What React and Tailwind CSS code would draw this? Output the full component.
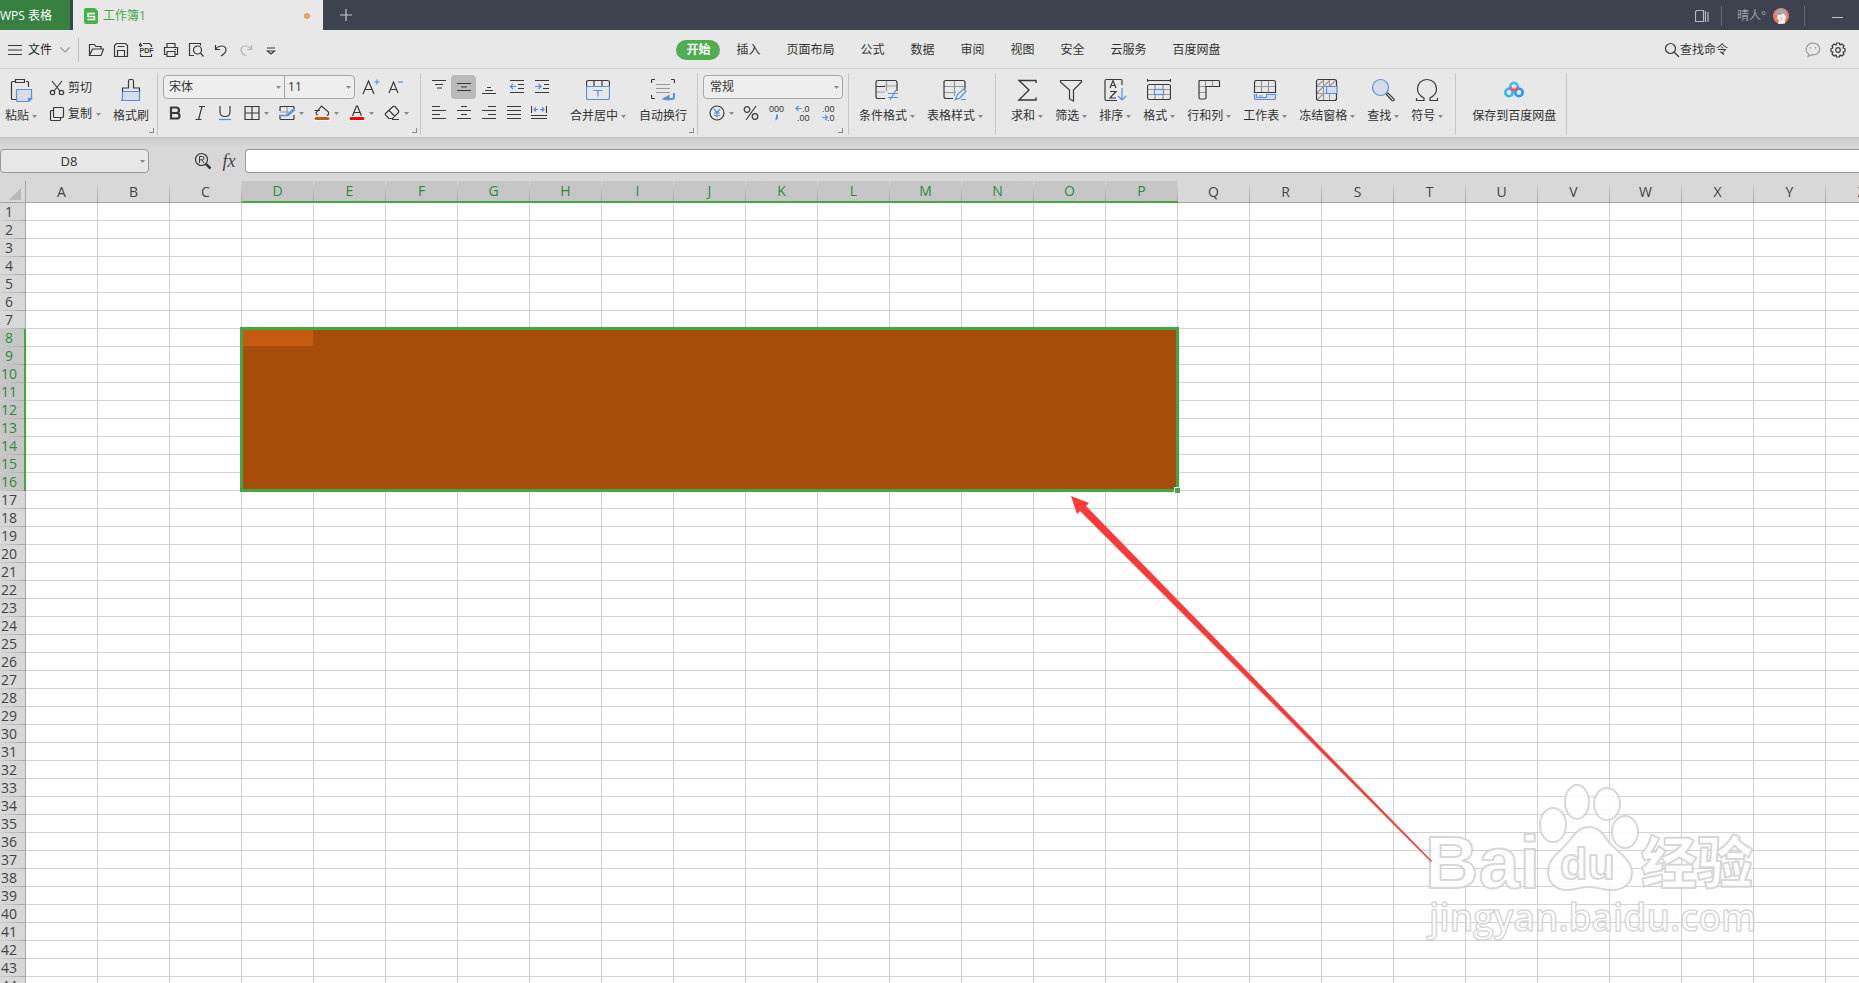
import React, { useState } from 'react';
import clsx from 'clsx';

const COLUMNS = 'ABCDEFGHIJKLMNOPQRSTUVWXYZ'.split('');
const ROWS = Array.from({ length: 46 }, (_, i) => i + 1);
const SELECTION = { left: 3, right: 15, top: 8, bottom: 16 };

const inCols = (c) => c >= SELECTION.left && c <= SELECTION.right;
const inRows = (r) => r >= SELECTION.top && r <= SELECTION.bottom;

const DARK = '#3a3a3a';
const BLUE = '#5a8fe0';
const MID = '#9a9a9a';
const PALE = '#d6dde8';

/* SHARED ICON FRAME */
const Icon = ({ w = 16, h = 16, children, className }) => (
    <svg width={w} height={h} viewBox={`0 0 ${w} ${h}`} fill="none" stroke={DARK} strokeWidth="1.2" className={clsx('shrink-0', className)} aria-hidden="true">
        {children}
    </svg>
);

const Caret = ({ className }) => (
    <svg width="5" height="3" viewBox="0 0 5 3" className={clsx('shrink-0', className)} aria-hidden="true">
        <path d="M0 0h5L2.5 3z" fill="#8a8a8a" />
    </svg>
);

/* QUICK ACCESS ICONS */
const quickTools = [
    { label: '打开', icon: <Icon><path d="M1.5 13.5V2.5h5l1.5 2h5v2.5M1.5 13.5l3-6.5h11l-2.5 6.5z" /></Icon> },
    { label: '保存', icon: <Icon><path d="M1.5 14.5v-11l2-2h9l2 2v11zM4.5 14V8.500h7V14M4.500 4.500h7" /></Icon> },
    {
        label: '输出为PDF',
        icon: (
            <Icon>
                <path d="M2.500 5V3.500M5 1.500h6.500l2 2V5M2.500 12v2.500h11V12M1 4l1.500-2.500L4 4" />
                <text x="1.500" y="11" fontSize="7" fontWeight="700" fontFamily="Liberation Sans" fill={DARK} stroke="none">PDF</text>
            </Icon>
        ),
    },
    { label: '打印', icon: <Icon><path d="M4 5V1.500h8V5M4 12.500H1.500V5.500h13v7H12M4 9.500h8v5H4zM11.500 7.500h1.500" /></Icon> },
    { label: '打印预览', icon: <Icon><path d="M6 13.500H1.500v-12h11v2" /><circle cx="9.500" cy="8" r="4" /><path d="M12.500 11l3 3.500" /></Icon> },
    { label: '撤销', icon: <Icon><path d="M2.500 3v4.500H7M2.500 7.500C6 2.500 13 3 13 8c0 3-2.500 4.500-5 6" /></Icon> },
    { label: '恢复', icon: <Icon><path stroke="#b4b4b4" d="M13.500 3v4.500H9M13.500 7.500C10 2.500 3 3 3 8c0 3 2.500 4.500 5 6" /></Icon> },
    { label: '更多', icon: <Icon><path d="M4 6h8M4.500 9L8 12l3.500-3z" /></Icon> },
];

const menuTabs = ['插入', '页面布局', '公式', '数据', '审阅', '视图', '安全', '云服务', '百度网盘'];

/* LARGE RIBBON ICONS */
const PasteIcon = (
    <Icon w={24} h={24}>
        <path d="M8 21.500H3.500a1 1 0 0 1-1-1v-16a1 1 0 0 1 1-1H6M17 3.500h1.500a1 1 0 0 1 1 1V9M6.500 1.500h9v3h-9z" />
        <path d="M8.500 11.500h14v9l-3 3h-11a1 1 0 0 1-1-1v-10a1 1 0 0 1 1-1z" fill={PALE} stroke={BLUE} />
        <path d="M22.500 20.500h-3v3z" fill={BLUE} stroke={BLUE} />
    </Icon>
);
const BrushIcon = (
    <Icon w={24} h={24}>
        <path d="M3.500 13.500h17v9H2.500l1-2z" fill={PALE} stroke={BLUE} />
        <path d="M3.500 13.500v-3.500h6V3q0-1.500 1.500-1.500h2q1.500 0 1.500 1.500v7h6v3.500" />
    </Icon>
);
const MergeIcon = (
    <Icon w={24} h={24}>
        <path d="M.5 8V4.500q0-2 2-2h19q2 0 2 2V8M8 3v5M16 3v5" />
        <path d="M.5 8.500h23v11q0 2-2 2h-19q-2 0-2-2zM7.500 12.500h9M12 12.500v6" stroke={BLUE} />
    </Icon>
);
const WrapIcon = (
    <Icon w={24} h={24}>
        <path d="M.5 5V2.500q0-1 1-1H4M20 1.500h2.500q1 0 1 1V5M.5 17v2.500q0 1 1 1H4" />
        <path d="M5 6.500h14M5 10.500h14M5 14.500h14" stroke={MID} />
        <path d="M23 15v4q0 2-2 2h-3" stroke={BLUE} strokeWidth="2" />
        <path d="M12 21l6-3.500V22z" fill={BLUE} stroke={BLUE} />
    </Icon>
);
const CondIcon = (
    <Icon w={24} h={24}>
        <path d="M9 8h13M1 14h9M11.500 3v10" stroke={MID} />
        <path d="M10 20.500H3q-2 0-2-2v-14q0-2 2-2h17q2 0 2 2V13M1 8.500h9" />
        <path d="M13 15.500h10M13 19.500h10M21 12l-6 10" stroke={BLUE} />
    </Icon>
);
const StyleIcon = (
    <Icon w={24} h={24}>
        <path d="M1 8.500h21M1 14.500h12M11.500 3v15" stroke={MID} />
        <path d="M10 20.500H3q-2 0-2-2v-14q0-2 2-2h17q2 0 2 2V11" />
        <path d="M12.500 21.500l2-5 6-5.500 2.500 2-6 7-4.500 1.500zM18 21.500h5" stroke={BLUE} />
    </Icon>
);
const SumIcon = <Icon w={24} h={24}><path d="M21 5V2.500H4l10 9.500-10 10h17V19.500" strokeWidth="1.400" /></Icon>;
const FilterIcon = <Icon w={24} h={24}><path d="M1.500 2.500h21v1.500l-8 8v11l-4-2v-9l-9-8z" /></Icon>;
const SortIcon = (
    <Icon w={24} h={24}>
        <path d="M14 22.500H3.500q-1.500 0-1.500-1.500V3q0-1.500 1.500-1.500H18q1 0 1 1V7" />
        <path d="M7 10l3-7.500L13 10M8 7.500h4M7 13.500h6L7 20h6" />
        <path d="M19 10v12M15 18l4 4 4-4" stroke={BLUE} />
    </Icon>
);
const FormatIcon = (
    <Icon w={24} h={24}>
        <path d="M.5 1v3M23.500 1v3M.5 2.500h23" />
        <path d="M8 7v14M16 7v14M1 11.500h22M1 16.500h22" stroke={MID} />
        <rect x=".5" y="6.500" width="23" height="15" rx="2" />
        <rect x="7.500" y="11.500" width="9" height="5" stroke={BLUE} fill="#e8e8e8" />
    </Icon>
);
const RowColIcon = (
    <Icon w={24} h={24}>
        <path d="M8.500 2v7M15.500 2v7M2 8.500h7M2 14.500h7" stroke={MID} />
        <path d="M3 2.500h18.500q1 0 1 1V8.500H9v11q0 1.500-1.500 1.500h-4q-1.500 0-1.500-1.500v-16q0-1 1-1z" />
    </Icon>
);
const SheetIcon = (
    <Icon w={24} h={24}>
        <path d="M8.500 2v12M15.500 2v12M1 8.500h22" stroke={MID} />
        <path d="M1.500 14.500v-10q0-2 2-2h17q2 0 2 2v10z" />
        <path d="M1.500 16v4.500q0 1 1 1h19q1 0 1-1V16.500h-9v3h-10V16M6 18h4" stroke={BLUE} fill={PALE} />
    </Icon>
);
const FreezeIcon = (
    <Icon w={24} h={24}>
        <path d="M8.500 2v20M14.500 2v20M2 8.500h20M2 15.500h20M2 8l7-6M2 15L15 2M2 22l6-6M15 8l6-6" stroke={MID} />
        <rect x="1.500" y="1.500" width="20" height="21" rx="2" />
        <path d="M11.500 8.500h10.500v7H11.500z" fill={PALE} stroke={BLUE} />
    </Icon>
);
const FindIcon = (
    <Icon w={24} h={24}>
        <circle cx="9.500" cy="9.500" r="8" fill={PALE} stroke={BLUE} />
        <path d="M15.500 16.500l1.500-1.500 6 6q.5 1-.5 1.500t-1.500 0z" />
    </Icon>
);
const OmegaIcon = <Icon w={24} h={24}><path d="M1.500 20v2.500H9v-2.500C5 18 2.500 15 2.500 11c0-5.500 4-9.500 9.500-9.500s9.500 4 9.500 9.500c0 4-2.500 7-6.500 9v2.500h7.500v-2.500" /></Icon>;
const NetdiskIcon = (
    <Icon w={24} h={24}>
        <circle cx="7" cy="14.500" r="3.700" stroke="#31b9f3" strokeWidth="2.600" />
        <circle cx="17" cy="14.500" r="3.700" stroke="#1ea0fa" strokeWidth="2.600" />
        <path d="M8.300 9.500a3.800 3.800 0 1 1 7.400 0" stroke="#35c3f5" strokeWidth="2.600" />
        <path d="M8.300 9a3.800 3.800 0 0 0 7.400 0" stroke="#f8506c" strokeWidth="2.600" />
    </Icon>
);

const analysisTools = [
    { label: '求和', icon: SumIcon },
    { label: '筛选', icon: FilterIcon },
    { label: '排序', icon: SortIcon },
    { label: '格式', icon: FormatIcon },
    { label: '行和列', icon: RowColIcon },
    { label: '工作表', icon: SheetIcon },
    { label: '冻结窗格', icon: FreezeIcon },
    { label: '查找', icon: FindIcon },
    { label: '符号', icon: OmegaIcon },
];

/* SMALL RIBBON ICONS */
const fontDropdowns = [
    { label: '边框', icon: <Icon><path d="M1 1.500h14v13H1zM8 1.500v13M1 8h14" /></Icon> },
    {
        label: '绘制边框',
        icon: (
            <Icon>
                <path d="M15 4V2.500q0-1-1-1H2q-1 0-1 1V6M1 11v2.500q0 1 1 1h12q1 0 1-1V10" />
                <path d="M1 7h9M8 2v9" stroke={MID} />
                <path d="M0 10.500h9L15.500 5h-2L8 10.500" stroke={BLUE} strokeWidth="1.500" />
            </Icon>
        ),
    },
    {
        label: '填充颜色',
        icon: (
            <Icon>
                <path d="M3.500 10.500L2 8l5.500-7 7 6v2q-.5 1.500-1.500 1.500M.5 5.500H6" />
                <path d="M2 13.500h12" stroke="#fff" strokeWidth="5" strokeLinecap="round" />
                <path d="M2 13.500h12" stroke="#c55a11" strokeWidth="3" strokeLinecap="round" />
            </Icon>
        ),
    },
    {
        label: '字体颜色',
        icon: (
            <Icon>
                <path d="M3.500 11L7.500 1h1l4 10M4.500 7.500h7" />
                <path d="M2 13.500h12" stroke="#fff" strokeWidth="5" strokeLinecap="round" />
                <path d="M2 13.500h12" stroke="#ff0000" strokeWidth="3" strokeLinecap="round" />
            </Icon>
        ),
    },
    { label: '清除', icon: <Icon><path d="M5 13.500L1.500 10q-.5-1 0-1.500L9 1.500q1-.5 2 0l3.500 4q.5 1 0 2L8.500 13.500zM5 5.500l6 6M8 14.500h7" /></Icon> },
];

const alignTop = [
    { label: '顶端对齐', icon: <Icon><path d="M1 1.500h14M4 5.500h8M6 9h5" /></Icon> },
    { label: '垂直居中', icon: <Icon><path d="M1 4.500h14M5 8h6M1 11.500h14" /></Icon>, active: true },
    { label: '底端对齐', icon: <Icon><path d="M6 8.500h4M4 11.500h8M1 14.500h14" /></Icon> },
];
const indentTools = [
    { label: '减少缩进', icon: <Icon><path d="M1 1.500h14M9 5.500h6M9 9.500h6M1 13.500h14" /><path d="M7 7.500H1.500M4 5L1.500 7.500 4 10" stroke={BLUE} /></Icon> },
    { label: '增加缩进', icon: <Icon><path d="M1 1.500h14M10 5.500h5M9 9.500h6M1 13.500h14" /><path d="M1 7.500h6M4.500 5L7 7.500 4.500 10" stroke={BLUE} /></Icon> },
];
const alignBottom = [
    { label: '左对齐', icon: <Icon><path d="M1 1.500h8M1 5.500h14M1 9.500h8M1 13.500h14" /></Icon> },
    { label: '居中', icon: <Icon><path d="M5 1.500h6M1 5.500h14M5 9.500h6M1 13.500h14" /></Icon> },
    { label: '右对齐', icon: <Icon><path d="M7 1.500h8M1 5.500h14M7 9.500h8M1 13.500h14" /></Icon> },
    { label: '两端对齐', icon: <Icon><path d="M1 1.500h14M1 5.500h14M1 9.500h14M1 13.500h14" /></Icon> },
    { label: '分散对齐', icon: <Icon><path d="M.5 1v7M15.500 1v7M0 10.500h16M0 13.500h16" /><path d="M3 4.500h4M9 4.500h4M5 2.500l-2 2 2 2M11 2.500l2 2-2 2" stroke={BLUE} /></Icon> },
];

const smallText = { fontSize: 9, fontFamily: 'Liberation Sans', fill: DARK, stroke: 'none' };
const numberTools = [
    { label: '百分比', icon: <Icon><circle cx="4" cy="4.500" r="2.800" /><circle cx="12" cy="11.500" r="2.800" /><path d="M13 1L3 15" /></Icon> },
    { label: '千位分隔', icon: <Icon><text x="0" y="7" {...smallText}>000</text><path d="M8 9.500v3q0 1.500-1.500 2" stroke={BLUE} strokeWidth="2" /></Icon> },
    { label: '增加小数', icon: <Icon><text x="7" y="7" {...smallText}>.0</text><text x="2" y="16" {...smallText}>.00</text><path d="M6.500 3.500H1M3.500 1L1 3.500 3.500 6" stroke={BLUE} /></Icon> },
    { label: '减少小数', icon: <Icon><text x="1" y="7" {...smallText}>.00</text><text x="6" y="16" {...smallText}>.0</text><path d="M1 12.500h5.500M4 10l2.500 2.500L4 15" stroke={BLUE} /></Icon> },
];

/* RIBBON BUILDING BLOCKS */
const BigButton = ({ icon, label, caret = true }) => (
    <button type="button" className="flex flex-col items-center gap-1">
        {icon}
        <span className="flex items-center gap-[3px] whitespace-nowrap leading-5">
            {label}
            {caret && <Caret />}
        </span>
    </button>
);

const SmallButton = ({ icon, label, active }) => (
    <button type="button" aria-label={label} className={clsx('flex h-6 w-[25px] items-center justify-center rounded', active && 'bg-[#bababa]')}>
        {icon}
    </button>
);

const SmallDropdown = ({ icon, label }) => (
    <button type="button" aria-label={label} className="flex h-6 w-[35px] items-center gap-1 pl-[7px]">
        {icon}
        <Caret />
    </button>
);

const Divider = () => <div className="mt-1 h-[62px] w-px shrink-0 bg-[#c8c8c8]" />;

const GroupCorner = () => (
    <div className="mb-1 mr-[3px] h-[5px] w-[5px] shrink-0 self-end border-b border-r border-[#8a8a8a]" />
);

const TitleBar = () => (
    <header className="flex h-[30px] shrink-0 items-stretch bg-[#3e424e]">
        <button type="button" className="w-[70px] whitespace-nowrap bg-[#38803f] pr-[18px] pt-px text-right text-xs text-white">WPS 表格</button>
        <div className="ml-[3px] flex w-[250px] items-center gap-1 bg-[#e8e8e8] pl-[11px] pr-[13px] pt-px">
            <svg width="14" height="16" viewBox="0 0 14 16" aria-hidden="true">
                <path d="M2 0h9l3 3v11q0 2-2 2H2q-2 0-2-2V2q0-2 2-2z" fill="#48b04b" />
                <path d="M11 5.500H4v3h6.500v3H3.500" stroke="#fff" strokeWidth="1.400" fill="none" />
            </svg>
            <span className="ml-px text-xs text-[#43a843]">工作簿1</span>
            <span className="ml-auto h-[6px] w-[6px] rounded-full bg-[#e8a05a]" />
        </div>
        <button type="button" aria-label="新建" className="flex w-[46px] items-center justify-center">
            <Icon w={12} h={12}><path d="M6 0v12M0 6h12" stroke="#c4c6cc" /></Icon>
        </button>
        <div className="ml-auto flex items-center pt-px">
            <Icon w={14} h={14}><path d="M1.500 1.500h7v11h-8v-10zM10.500 2v11M13 3v10" stroke="#b4b6bc" /></Icon>
            <div className="ml-3 h-5 w-px bg-[#63666f]" />
            <span className="ml-[15px] w-9 whitespace-nowrap text-xs text-[#9da0a8]">晴人°</span>
            <svg width="16" height="16" viewBox="0 0 16 16" aria-hidden="true">
                <circle cx="8" cy="8" r="8" fill="#e8796a" />
                <path d="M5 16l1-3-2-3 1-5 7 0 1 4-1 4 0 2.500z" fill="#f6efee" />
                <path d="M2.500 6.500Q3 1 8 .500t5.500 5.500l-1 2-2-2.500-3 1.500-3 0-1 1z" fill="#a9a5a4" />
                <path d="M7 9l2 1-1 3" stroke="#cdbdb9" fill="none" />
            </svg>
            <div className="ml-[15px] h-5 w-px bg-[#63666f]" />
            <button type="button" aria-label="最小化" className="ml-[27px] mr-4 mt-[3px] h-px w-[11px] bg-[#c4c6cc]" />
        </div>
    </header>
);

const MenuBar = () => (
    <div className="flex h-[39px] shrink-0 items-center border-b border-[#d2d2d2] bg-[#e8e8e8] pt-px">
        <div className="flex flex-1 items-center">
            <button type="button" className="flex items-center gap-[6px] pl-2">
                <Icon w={14} h={12}><path d="M0 1.500h14M0 6h14M0 10.500h14" /></Icon>
                <span className="text-[#222]">文件</span>
                <Icon w={10} h={6} className="ml-[2px]"><path d="M.5.5L5 5 9.500.5" stroke={MID} /></Icon>
            </button>
            <div className="ml-2 mr-1 h-6 w-px bg-[#c0c0c0]" />
            {quickTools.map((tool) => (
                <SmallButton key={tool.label} {...tool} />
            ))}
        </div>
        <nav className="flex items-center gap-[26px] whitespace-nowrap pl-[47px]">
            <a href="#home" className="-mr-[10px] rounded-full bg-[#52ad52] px-[10px] font-bold leading-5 text-white">开始</a>
            {menuTabs.map((tab) => (
                <a key={tab} href={`#${tab}`} className="leading-5">{tab}</a>
            ))}
        </nav>
        <div className="flex flex-1 items-center justify-end pr-[9px]">
            <button type="button" className="mr-[72px] flex items-center">
                <Icon><circle cx="6.500" cy="6.500" r="5" /><path d="M10 10l5 5" /></Icon>
                查找命令
            </button>
            <SmallButton label="反馈" icon={(
                <Icon>
                    <path d="M3 14.500l.5-2.500C0 9.500.5 5 3.500 2.500c3-2 7-1.500 9 0 3 2.500 3 7 0 9-2 1.500-4 1.500-6 1.200z" stroke={MID} />
                    <path d="M5.500 5v1.500M10.500 5v1.500" stroke={MID} />
                </Icon>
            )} />
            <SmallButton label="设置" icon={(
                <Icon>
                    <circle cx="8" cy="8" r="2.300" />
                    <path d="M6.500 1h3l.5 2 2-1 2 2-1 2 2 .5v3l-2 .5 1 2-2 2-2-1-.5 2h-3L6 13l-2 1-2-2 1-2-2-.5v-3L3 6 2 4l2-2 2 1z" strokeLinejoin="round" />
                </Icon>
            )} />
        </div>
    </div>
);

const Ribbon = () => {
    const [font, setFont] = useState('宋体');
    const [size, setSize] = useState('11');
    const [format, setFormat] = useState('常规');

    return (
        <section className="flex h-[69px] shrink-0 items-start border-b border-[#c4c4c4] bg-[#e8e8e8]">
            {/* CLIPBOARD */}
            <div className="flex h-full shrink-0 items-start">
                <div className="flex items-start gap-3 pl-[5px] pt-[9px]">
                    <BigButton icon={PasteIcon} label="粘贴" />
                    <div className="flex flex-col gap-[6px]">
                        <button type="button" className="flex h-5 items-center gap-[3px]">
                            <Icon><path d="M3 1l8 10M13 1L5 11" /><circle cx="3.500" cy="12.500" r="2.200" /><circle cx="12.500" cy="12.500" r="2.200" /></Icon>
                            剪切
                        </button>
                        <button type="button" className="flex h-5 items-center gap-[3px]">
                            <Icon><path d="M5.500 1.500h8q1 0 1 1v8q0 1-1 1h-8q-1 0-1-1v-8q0-1 1-1zM4.500 4.500h-2q-1 0-1 1v8q0 1 1 1h8q1 0 1-1v-2" /></Icon>
                            复制
                            <Caret className="ml-px" />
                        </button>
                    </div>
                    <BigButton icon={BrushIcon} label="格式刷" caret={false} />
                </div>
                <GroupCorner />
            </div>
            <Divider />

            {/* FONT */}
            <div className="flex h-full shrink-0 items-start">
                <div className="flex flex-col gap-[2px] pl-[5px] pt-[6px]">
                    <div className="flex items-center">
                        <div className="mr-[3px] flex h-6 rounded border border-[#a6a6a6] bg-[#eee]">
                            <label className="relative flex w-[121px] items-center border-r border-[#a6a6a6]">
                                <select aria-label="字体" value={font} onChange={(e) => setFont(e.target.value)} className="w-full appearance-none bg-transparent pl-[5px] outline-none">
                                    <option>宋体</option>
                                    <option>黑体</option>
                                </select>
                                <Caret className="absolute right-[3px]" />
                            </label>
                            <label className="relative flex w-[69px] items-center">
                                <select aria-label="字号" value={size} onChange={(e) => setSize(e.target.value)} className="w-full appearance-none bg-transparent pl-[3px] outline-none">
                                    <option>11</option>
                                    <option>12</option>
                                </select>
                                <Caret className="absolute right-[3px]" />
                            </label>
                        </div>
                        <SmallButton label="增大字号" icon={<Icon w={18} h={16}><path d="M1 15L6.500 2 12 15M3 10.500h7" /><path d="M15 .500v5M12.500 3h5" stroke={BLUE} /></Icon>} />
                        <SmallButton label="减小字号" icon={<Icon w={16} h={16}><path d="M1 14L5.500 3 10 14M2.500 10.500h6" /><path d="M10 3h5" stroke={BLUE} /></Icon>} />
                    </div>
                    <div className="-ml-px flex">
                        <SmallButton label="加粗" icon={<Icon><path d="M4 2.500h5q3 0 3 2.800T9 8H4zM4 8h5.500q3 0 3 2.800T9.500 13.500H4z" strokeWidth="2.200" /></Icon>} />
                        <SmallButton label="倾斜" icon={<Icon><path d="M7 1.500h6M3.500 14.500h6M10 1.500L6.500 14.500" /></Icon>} />
                        <SmallButton label="下划线" icon={<Icon><path d="M3 1v6q0 4.500 5 4.500T13 7V1" /><path d="M2 14.500h12" stroke={BLUE} /></Icon>} />
                        {fontDropdowns.map((tool) => (
                            <SmallDropdown key={tool.label} {...tool} />
                        ))}
                    </div>
                </div>
                <GroupCorner />
            </div>
            <Divider />

            {/* ALIGNMENT */}
            <div className="flex h-full shrink-0 items-start">
                <div className="flex flex-col gap-[2px] pl-[5px] pt-[6px]">
                    <div className="flex">
                        {alignTop.map((tool) => (
                            <SmallButton key={tool.label} {...tool} />
                        ))}
                        <div className="ml-[3px] flex">
                            {indentTools.map((tool) => (
                                <SmallButton key={tool.label} {...tool} />
                            ))}
                        </div>
                    </div>
                    <div className="flex">
                        {alignBottom.map((tool) => (
                            <SmallButton key={tool.label} {...tool} />
                        ))}
                    </div>
                </div>
                <div className="flex gap-[13px] pl-4 pr-[2px] pt-[9px]">
                    <BigButton icon={MergeIcon} label="合并居中" />
                    <BigButton icon={WrapIcon} label="自动换行" caret={false} />
                </div>
                <GroupCorner />
            </div>
            <Divider />

            {/* NUMBER */}
            <div className="flex h-full shrink-0 items-start">
                <div className="flex flex-col gap-[2px] pl-[5px] pt-[6px]">
                    <label className="relative flex h-6 w-[140px] items-center rounded border border-[#a6a6a6] bg-[#eee]">
                        <select aria-label="数字格式" value={format} onChange={(e) => setFormat(e.target.value)} className="w-full appearance-none bg-transparent pl-[6px] outline-none">
                            <option>常规</option>
                            <option>数值</option>
                        </select>
                        <Caret className="absolute right-[3px]" />
                    </label>
                    <div className="-ml-px flex gap-px">
                        <SmallDropdown label="货币" icon={(
                            <Icon>
                                <circle cx="8" cy="8" r="7" />
                                <path d="M5 4l3 3.500L11 4M8 7.500V12.500M5 8h6M5 10.500h6" stroke={BLUE} />
                            </Icon>
                        )} />
                        {numberTools.map((tool) => (
                            <SmallButton key={tool.label} {...tool} />
                        ))}
                    </div>
                </div>
                <div className="-ml-[5px] flex h-full pr-[2px]"><GroupCorner /></div>
            </div>
            <Divider />

            {/* STYLES */}
            <div className="flex shrink-0 gap-3 pl-[10px] pr-3 pt-[9px]">
                <BigButton icon={CondIcon} label="条件格式" />
                <BigButton icon={StyleIcon} label="表格样式" />
            </div>
            <Divider />

            {/* CELLS AND EDITING */}
            <div className="flex shrink-0 gap-3 pl-[15px] pr-3 pt-[9px]">
                {analysisTools.map((tool) => (
                    <BigButton key={tool.label} {...tool} />
                ))}
            </div>
            <Divider />
            <div className="shrink-0 pl-4 pr-[10px] pt-[9px]">
                <BigButton icon={NetdiskIcon} label="保存到百度网盘" caret={false} />
            </div>
            <Divider />
        </section>
    );
};

const FormulaBar = () => {
    const [cell, setCell] = useState('D8');
    const [formula, setFormula] = useState('');

    return (
        <div className="flex h-[43px] shrink-0 items-center bg-linear-to-b from-[#cccccc] to-[#d8d8d8] to-20% pt-[3px]">
            <label className="relative flex h-6 w-[149px] items-center rounded border border-[#999] bg-[#e8e8e8]">
                <input aria-label="名称框" value={cell} onChange={(e) => setCell(e.target.value)} className="w-full bg-transparent pr-[11px] pt-px text-center text-[13px] text-[#333] outline-none" />
                <Caret className="absolute right-[3px]" />
            </label>
            <button type="button" aria-label="浏览公式结果" className="ml-[45px]">
                <Icon w={18} h={18}>
                    <circle cx="7.500" cy="7.500" r="6" />
                    <path d="M12 12l4.500 4.500" strokeWidth="2.500" />
                    <path d="M5.500 11V4.500h3q1.500 0 1.500 1.600T8.500 7.800h-3M8 8l2 3" strokeWidth="1" />
                </Icon>
            </button>
            <button type="button" aria-label="插入函数" className="ml-[5px] mr-1 w-6 font-['Liberation_Serif',serif] text-lg italic leading-5 text-[#444]">fx</button>
            <input aria-label="编辑栏" value={formula} onChange={(e) => setFormula(e.target.value)} className="h-6 flex-1 rounded-l border border-r-0 border-[#999] bg-white px-2 outline-none" />
        </div>
    );
};

/* ARROW AND WATERMARK LYING OVER THE SHEET */
const Overlay = () => (
    <svg width="1859" height="802" viewBox="0 181 1859 802" className="pointer-events-none absolute left-0 top-0" aria-hidden="true">
        <g fill="#fff" fillOpacity="0.85" stroke="#c6c6c6" strokeOpacity="0.7" strokeWidth="2" strokeLinejoin="round">
            <ellipse cx="1553" cy="825" rx="13" ry="17" />
            <ellipse cx="1577" cy="802" rx="12" ry="17" />
            <ellipse cx="1607" cy="804" rx="13" ry="16" />
            <ellipse cx="1625" cy="832" rx="13" ry="16" />
            <path d="M1589 827c9 0 14 6 19 14s24 17 24 32c0 10-8 17-20 17-9 0-15-3-23-3s-14 3-22 3c-12 0-19-8-19-18 0-15 15-22 22-32 5-7 10-13 19-13z" />
            <text x="1425" y="888" fontSize="74" fontWeight="700" fontFamily="Liberation Sans">Bai</text>
            <text x="1560" y="879" fontSize="45" fontWeight="700" fontFamily="Liberation Sans">du</text>
            <text x="1641" y="883" fontSize="56" fontWeight="900" fontFamily="Noto Sans CJK SC">经验</text>
            <text x="1429" y="931" fontSize="37" fontWeight="600" fontFamily="Open Sans" strokeWidth="1.500">jingyan.baidu.com</text>
        </g>
        <path d="M1071 496l18 7-3 3 346 355-1 1-351-351-3 3z" fill="#fc3a3a" />
    </svg>
);

const cellClass = (r, c) => {
    if (r === SELECTION.top && c === SELECTION.left) return 'border-b border-r border-[#a84c0c] bg-[#c55a11]';
    if (inRows(r) && inCols(c)) return 'bg-[#a84c0c]';
    return 'border-b border-r border-[#d2d2d2]';
};

const Sheet = () => (
    <main className="relative min-h-0 flex-1 overflow-hidden bg-white">
        <table className="w-[1898px] table-fixed border-separate border-spacing-0 font-['Open_Sans',sans-serif] text-[14px] leading-4 text-[#444]">
            <colgroup>
                <col className="w-[26px]" />
                {COLUMNS.map((name) => <col key={name} className="w-[72px]" />)}
            </colgroup>
            <thead>
                <tr className="h-[22px]">
                    <th className="border-b border-r border-[#a6a6a6] bg-[#d8d8d8] p-0">
                        <svg width="12" height="12" viewBox="0 0 12 12" className="ml-[9px] mt-1" aria-hidden="true">
                            <path d="M12 0v12H0z" fill="#b8b8b8" />
                        </svg>
                    </th>
                    {COLUMNS.map((name, c) => (
                        <th
                            key={name}
                            scope="col"
                            className={clsx(
                                'bg-linear-to-b from-[#d8d8d8] to-[#a6a6a6] p-0 font-normal',
                                inCols(c) ? 'border-b-2 border-[#43a843] text-[#2f8a3c]' : 'border-b border-[#a6a6a6]'
                            )}
                        >
                            <div className={clsx('mr-px flex items-center justify-center', inCols(c) ? 'h-5 bg-[#c6c6c6]' : 'h-[21px] bg-[#d8d8d8]')}>{name}</div>
                        </th>
                    ))}
                </tr>
            </thead>
            <tbody>
                {ROWS.map((r) => (
                    <tr key={r} className="h-[18px]">
                        <th
                            scope="row"
                            className={clsx(
                                'bg-linear-to-r from-[#d0d0d0] to-[#a6a6a6] p-0 font-normal',
                                inRows(r) ? 'border-r-2 border-[#43a843] text-[#2f8a3c]' : 'border-r border-[#a6a6a6]'
                            )}
                        >
                            <div className={clsx('mb-px flex h-[17px] items-center', inRows(r) ? 'bg-[#c6c6c6]' : 'bg-[#d8d8d8]')}>
                                <span className="w-[18px] text-center">{r}</span>
                            </div>
                        </th>
                        {COLUMNS.map((name, c) => (
                            <td key={name} className={clsx('p-0', cellClass(r, c))} />
                        ))}
                    </tr>
                ))}
            </tbody>
        </table>

        {/* SELECTION FRAME */}
        <div className="pointer-events-none absolute left-[240px] top-[146px] h-[165px] w-[939px] border-[3px] border-[#43a843]">
            <div className="absolute -bottom-[4px] -right-[4px] h-[6px] w-[6px] border-l border-t border-white bg-[#43a843]" />
        </div>
        <Overlay />
    </main>
);

const App = () => (
    <div className="flex h-screen flex-col overflow-hidden bg-white font-['Open_Sans','Noto_Sans_CJK_SC',sans-serif] text-xs text-[#333]">
        <TitleBar />
        <MenuBar />
        <Ribbon />
        <FormulaBar />
        <Sheet />
    </div>
);

export default App;
